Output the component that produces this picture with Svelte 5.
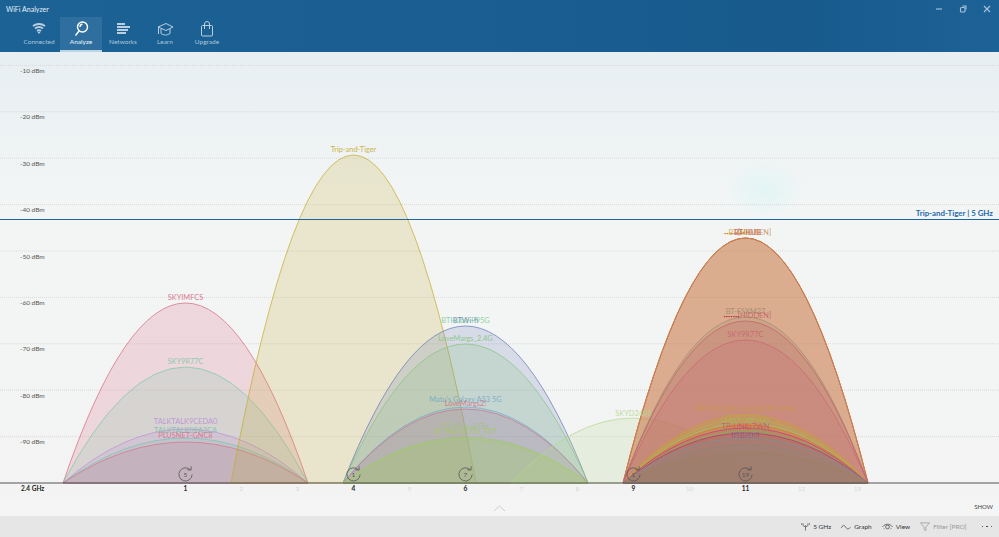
<script>
  const BASE = 483;
  const SPREAD = 122.5;
  const chanX = (c) => 185.5 + (c - 1) * 56;

  const nets = [
    // 2.4 GHz, left group
    { c: 1, peak: 303, color: "#d9657f", label: "SKYIMFCS" },
    { c: 1, peak: 367, color: "#7cc7a9", label: "SKY9R77C" },
    { c: 1, peak: 429, color: "#bd8fd2", label: "TALKTALK9CEDA0", dy: 2 },
    { c: 1, peak: 438, color: "#7cc0b0", label: "TALKTALK09A2CA", dy: 2 },
    { c: 1, peak: 442, color: "#d8708c", label: "PLUSNET-GNC8", dy: 0.500 },
    { c: 4, peak: 155, color: "#c4ab2c", label: "Trip-and-Tiger" },
    // channel 6
    { c: 6, peak: 326, color: "#6478b4", label: "BTWi-fi" },
    { c: 6, peak: 326, color: "#7ccf9c", label: "BTHub6-P95G", noLine: true },
    { c: 6, peak: 344, color: "#84c47c", label: "LoveMargs_2.4G" },
    { c: 6, peak: 407, color: "#74aac8", label: "Matu's Galaxy A53 5G", dy: 2 },
    { c: 6, peak: 409, color: "#d0708c", label: "LoveMargs2!" },
    { c: 6, peak: 437, color: "#9cc870", label: "EE-Hub-pD7p", dy: 5 },
    { c: 6, peak: 439, color: "#a4cc60", label: "EE-Hub-pD7p_EXT", dy: 2 },
    // channel 9
    { c: 9, peak: 418, color: "#b4d88c", label: "SKYD2485", dy: -1 },
    // channel 11, strong
    { c: 11, peak: 238, color: "#c8702c", label: "•••••••••", dx: -11, dots: true },
    { c: 11, peak: 238, color: "#d0b030", label: "BTWifi-X", dx: -2 },
    { c: 11, peak: 238, color: "#d0506c", label: "BT-HUB", dx: 2 },
    { c: 11, peak: 238, color: "#c4884c", label: "[HIDDEN]", dx: 9 },
    { c: 11, peak: 317, color: "#9c8c70", label: "BT-FSXM27", dx: 0 },
    { c: 11, peak: 321, color: "#c05c68", label: "[HIDDEN]", dx: 9, dy: -0.500 },
    { c: 11, peak: 321, color: "#b03040", label: "•••••••", dx: -14, dy: -0.500, noLine: true, dots: true },
    { c: 11, peak: 340, color: "#cc6274", label: "SKY9R77C" },
    // channel 11, weak
    { c: 11, peak: 415, color: "#c8a428", label: "HP-Print-4A-LaserJet 20 series", dy: 1, weak: true },
    { c: 11, peak: 419, color: "#b0b440", label: "BT-MXAZGG", dy: -4, weak: true },
    { c: 11, peak: 423, color: "#9cc070", label: "SHELL_BT_362", dy: -4, weak: true },
    { c: 11, peak: 425, color: "#e07030", label: "[HIDDEN]", dy: -7, weak: true },
    { c: 11, peak: 428, color: "#d02c8c", label: "TP-LINK-7WN", dy: -4, weak: true },
    { c: 11, peak: 431, color: "#7cb060", label: "EE-Hub-4RK2", dy: -6, weak: true },
    { c: 11, peak: 433, color: "#b0307c", label: "BTBHX9", dy: -8, weak: true },
    { c: 11, peak: 438, color: "#7494a0", label: "BT-X4G", dy: -3, weak: true },
    { c: 11, peak: 442, color: "#b07c70", label: "BT-QZAK93", dy: -5, weak: true },
    { c: 11, peak: 445, color: "#8c8878" },
    { c: 11, peak: 452, color: "#a08060" }
  ];

  // each lobe is a parabola, so a single quadratic curve draws it
  const lobe = (n) => {
    const cx = chanX(n.c);
    const top = 2 * n.peak - BASE;
    return `M${cx - SPREAD} ${BASE}Q${cx} ${top} ${cx + SPREAD} ${BASE}Z`;
  };

  const levels = [-10, -20, -30, -40, -50, -60, -70, -80, -90];
  const levelY = (l) => 483 - (l + 100) * 4.64;
  const channels = [1, 2, 3, 4, 5, 6, 7, 8, 9, 10, 11, 12, 13];
  const used = { 1: "5", 4: "1", 6: "7", 9: "1", 11: "19" };
  const badges = Object.keys(used).map((k) => ({ c: +k, n: used[k] }));

  const tabs = ["Connected", "Analyze", "Networks", "Learn", "Upgrade"];
</script>

<div class="app">
  <header>
    <div class="titlebar">
      <span class="title">WiFi Analyzer</span>
      <div class="controls">
        <svg width="10" height="10" viewBox="0 0 10 10"><path d="M2 5h6" /></svg>
        <svg width="10" height="10" viewBox="0 0 10 10"><rect x="2.500" y="3.500" width="4.500" height="4.500" rx="1" /><path d="M4.500 2h3.500v3.500" /></svg>
        <svg width="10" height="10" viewBox="0 0 10 10"><path d="M2 2l6 6M8 2l-6 6" /></svg>
      </div>
    </div>
    <nav>
      {#each tabs as tab}
        <div class="tab" class:active={tab === "Analyze"}>
          <svg width="18" height="16" viewBox="0 0 18 16">
            {#if tab === "Connected"}
              <path class="thick" d="M3 5C6.500 2.300 11.500 2.300 15 5M5 7.500C7.400 5.700 10.600 5.700 13 7.500M7 10c1.200-.9 2.800-.9 4 0" />
              <path class="solid" d="M9 13l-1.500-2h3z" />
            {:else if tab === "Analyze"}
              <circle cx="10.500" cy="6" r="5" />
              <path d="M7 10L3.500 14.500M8 6a2.700 2.700 0 0 1 2.500-2.700" />
            {:else if tab === "Networks"}
              <path class="thick" d="M3 3h8M3 6h13M3 9h11M3 12h9" />
            {:else if tab === "Learn"}
              <path d="M2 6l8-3.500L17 6l-7 3.500zM5 8v4.500c3 2 6 2 9 0V8M2.500 6.500V13" />
            {:else}
              <rect x="3.500" y="4.500" width="11" height="10.500" rx="1" />
              <path d="M6.500 8V3a2.500 2.500 0 0 1 5 0v5" />
            {/if}
          </svg>
          <span>{tab}</span>
        </div>
      {/each}
    </nav>
  </header>

  <main>
    <svg class="chart" width="999" height="448" viewBox="0 52 999 448">
      <defs>
        <linearGradient id="sky" x1="0" y1="0" x2="0" y2="1">
          <stop offset="0" stop-color="#e7eff2" />
          <stop offset="0.34" stop-color="#f3f5f5" />
          <stop offset="1" stop-color="#f3f3f3" />
        </linearGradient>
        <radialGradient id="glow">
          <stop offset="0" stop-color="#e2f5f4" />
          <stop offset="1" stop-color="#e2f5f4" stop-opacity="0" />
        </radialGradient>
      </defs>
      <rect x="0" y="52" width="999" height="448" fill="url(#sky)" />
      <ellipse cx="765" cy="190" rx="42" ry="30" fill="url(#glow)" />

      {#each levels as l}
        <line class="grid" x1="0" x2="999" y1={levelY(l)} y2={levelY(l)} />
        <text class="level" x="20" y={levelY(l) + 7.500}>{l} dBm</text>
      {/each}

      {#each nets as n}
        {#if !n.noLine}
          <path d={lobe(n)} fill={n.color} stroke={n.color} class="lobe" />
        {/if}
      {/each}

      {#each nets as n}
        {#if n.label}
          <text
            class="ssid"
            class:dots={n.dots}
            class:weak={n.weak}
            x={chanX(n.c) + (n.dx || 0)}
            y={n.peak - 3.500 - (n.dy || 0)}
            fill={n.color}
          >{n.label}</text>
        {/if}
      {/each}

      <line class="own" x1="0" x2="999" y1="219.500" y2="219.500" />
      <text class="own-label" x="993" y="216">Trip-and-Tiger | 5 GHz</text>

      {#each badges as b}
        <g transform="translate({chanX(b.c)} 474.500)">
          <path class="badge" d="M5 -4.400A6.600 6.600 0 1 0 6.600 0" />
          <path class="badge" d="M1.800 -4.600H5.600V-8.200" />
          <text class="badge-num" y="2.500">{b.n}</text>
        </g>
      {/each}

      <line class="axis" x1="0" x2="999" y1="483" y2="483" />
      <text class="band" x="21" y="491">2.4 GHz</text>
      {#each channels as c}
        <text class="chan" class:on={used[c]} x={chanX(c)} y="491">{c}</text>
      {/each}
    </svg>
    <div class="strip">
      <svg class="chevron" width="13" height="7" viewBox="0 0 13 7"><path d="M1 6l5.500-5 5.500 5" /></svg>
      <span class="show">SHOW</span>
    </div>
  </main>

  <footer>
    <div class="cmd">
      <svg width="9" height="11" viewBox="0 0 11 11"><path d="M5.500 4v6.500M2.500 1.500v3l3 1.500 3-1.500v-3M.500 1.500v2M10.500 1.500v2" /></svg>
      <span>5 GHz</span>
    </div>
    <div class="cmd">
      <svg width="10" height="11" viewBox="0 0 11 11"><path d="M.500 7C2 3.500 3.500 3.500 5 6s2.500 3 5.500.500" /></svg>
      <span>Graph</span>
    </div>
    <div class="cmd">
      <svg width="11" height="11" viewBox="0 0 12 11"><path d="M.500 6C3.500 2 8.500 2 11.500 6" /><circle cx="6" cy="6" r="2" /><path d="M2 7.500l1 1M10 7.500l-1 1" /></svg>
      <span>View</span>
    </div>
    <div class="cmd off">
      <svg width="10" height="11" viewBox="0 0 11 11"><path d="M.500 1.500h10L6.500 6v4L4.500 9V6z" /></svg>
      <span>Filter [PRO]</span>
    </div>
    <div class="more"><i></i><i></i><i></i></div>
  </footer>
</div>

<style>
  :global(body) {
    background: #f3f3f3;
  }

  .app {
    width: 999px;
    height: 537px;
    display: flex;
    flex-direction: column;
    overflow: hidden;
    font-family: Lato, "Open Sans", sans-serif;
  }

  header {
    height: 52px;
    flex: none;
    display: flex;
    flex-direction: column;
    background: linear-gradient(90deg, #1c6295 0%, #1b5e91 45%, #185a8c 80%, #1d6296 100%);
  }

  .titlebar {
    height: 17px;
    display: flex;
    align-items: center;
    justify-content: space-between;
    padding: 0 7px 0 6px;
  }

  .title {
    font-size: 7px;
    color: #e6eef4;
  }

  .controls {
    display: flex;
    gap: 14px;
  }

  .controls svg {
    display: block;
    fill: none;
    stroke: #a8c4da;
    stroke-width: 1.100;
  }

  nav {
    flex: 1;
    display: flex;
    padding-left: 18px;
  }

  .tab {
    width: 42px;
    display: flex;
    flex-direction: column;
    align-items: center;
    justify-content: flex-end;
    box-sizing: border-box;
    padding-bottom: 5px;
    color: #a9c5da;
    font-size: 6.500px;
    line-height: 10px;
  }

  .tab svg {
    fill: none;
    stroke: #b9cfe0;
    stroke-width: 1;
  }

  .tab .thick {
    stroke-width: 1.800;
  }

  .tab .solid {
    fill: #b9cfe0;
    stroke: none;
  }

  .tab.active {
    background: #2f6f9f;
    color: #eef4f8;
    border-bottom: 2px solid #bcd3e2;
    padding-bottom: 3px;
  }

  .tab.active svg {
    stroke: #fff;
    stroke-width: 1.400;
  }

  main {
    flex: 1;
    display: flex;
    flex-direction: column;
  }

  .chart {
    display: block;
  }

  .grid {
    stroke: #d9d9d9;
    stroke-width: 1;
    stroke-dasharray: 1 1;
  }

  .level {
    font-size: 6.500px;
    fill: #555;
  }

  .lobe {
    fill-opacity: 0.2;
    stroke-opacity: 0.7;
    stroke-width: 1;
  }

  .ssid {
    font-size: 7.400px;
    text-anchor: middle;
    opacity: 0.85;
  }

  .ssid.dots {
    font-size: 4px;
    opacity: 1;
  }

  .ssid.weak {
    opacity: 0.55;
  }

  .own {
    stroke: #1c66a6;
    stroke-width: 1;
  }

  .own-label {
    font-size: 7.900px;
    font-weight: 700;
    fill: #1d6aae;
    text-anchor: end;
  }

  .badge {
    fill: none;
    stroke: #555;
    stroke-width: 0.800;
  }

  .badge-num {
    font-size: 6.500px;
    fill: #555;
    text-anchor: middle;
  }

  .axis {
    stroke: #555;
    stroke-width: 1;
  }

  .band {
    font-size: 6.500px;
    font-weight: 700;
    fill: #222;
  }

  .chan {
    font-size: 6.500px;
    fill: #d8d8d8;
    text-anchor: middle;
  }

  .chan.on {
    fill: #222;
    font-weight: 700;
  }

  .strip {
    height: 16px;
    display: flex;
    align-items: center;
    justify-content: center;
    position: relative;
    background: #f5f5f5;
  }

  .chevron {
    fill: none;
    stroke: #cfcfcf;
  }

  .show {
    position: absolute;
    right: 6px;
    top: 2px;
    font-size: 6px;
    line-height: 10px;
    color: #444;
  }

  footer {
    height: 21px;
    flex: none;
    display: flex;
    align-items: center;
    justify-content: flex-end;
    gap: 10px;
    padding-right: 7px;
    background: #e6e6e6;
  }

  .cmd {
    display: flex;
    align-items: center;
    gap: 3px;
    font-size: 6.500px;
    color: #333;
  }

  .cmd svg {
    fill: none;
    stroke: #444;
    stroke-width: 0.800;
  }

  .cmd.off {
    color: #999;
  }

  .cmd.off svg {
    stroke: #999;
  }

  .more {
    display: flex;
    gap: 3px;
    margin-left: 5px;
  }

  .more i {
    width: 1.500px;
    height: 1.500px;
    background: #333;
    border-radius: 50%;
  }
</style>
